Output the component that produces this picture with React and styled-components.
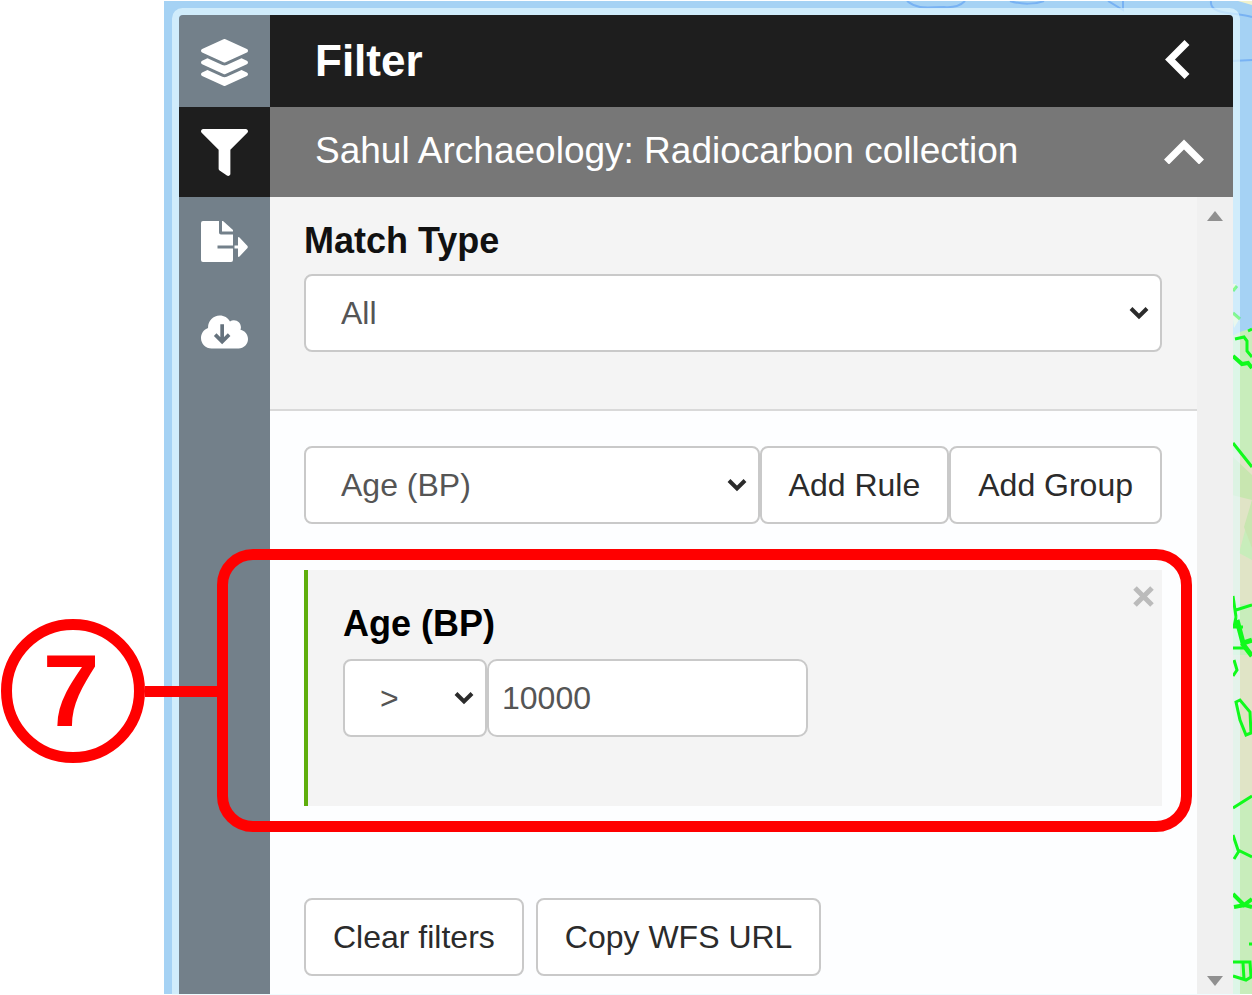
import React from "react";
import styled, { createGlobalStyle } from "styled-components";
import { FaLayerGroup, FaFilter } from "react-icons/fa";

const GlobalStyle = createGlobalStyle`
  *, *::before, *::after { box-sizing: border-box; }
  body {
    margin: 0;
    background: #fff;
    font-family: "Liberation Sans", Arial, Helvetica, sans-serif;
    color: #111;
  }
  button, input, select { font: inherit; margin: 0; }
  h1, h2 { margin: 0; }
`;

const Page = styled.main`
  display: flex;
  min-height: 100vh;
  padding: 1px 0 1px 164px;
`;

const MapArea = styled.div`
  position: relative;
  isolation: isolate;
  display: flex;
  flex: 1;
  min-width: 0;
  padding: 14px 19px 0 15px;
  background: #a5d2f4;
`;

const MapLayer = styled.svg`
  position: absolute;
  z-index: ${(p) => p.$level};
  top: 0;
  right: 0;
  width: 360px;
  height: 100%;
`;

const Panel = styled.section`
  position: relative;
  display: flex;
  flex: 1;
  min-width: 0;

  &::before {
    content: "";
    position: absolute;
    z-index: -1;
    inset: 0;
    border-radius: 4px 4px 0 0;
    box-shadow: 0 0 0 7px rgba(230, 250, 255, 0.65);
  }
`;

const Sidebar = styled.nav`
  display: flex;
  flex-direction: column;
  flex: none;
  width: 91px;
  padding-top: 2px;
  background: #73808a;
  border-radius: 4px 0 0 0;
`;

const SideTab = styled.button`
  display: flex;
  align-items: center;
  justify-content: center;
  height: 90px;
  padding: 0;
  border: 0;
  color: #fff;
  background: ${(p) => (p.$active ? "#1e1e1e" : "transparent")};
`;

const Main = styled.div`
  display: flex;
  flex-direction: column;
  flex: 1;
  min-width: 0;
`;

const TitleBar = styled.header`
  display: flex;
  align-items: center;
  justify-content: space-between;
  height: 92px;
  padding: 0 42px 0 45px;
  color: #fff;
  background: #1e1e1e;
  border-radius: 0 4px 0 0;
`;

const Title = styled.h1`
  font-size: 44px;
  line-height: 48px;
`;

const IconButton = styled.button`
  display: flex;
  padding: 0;
  border: 0;
  color: inherit;
  background: none;
`;

const LayerHeading = styled.h2`
  font-size: 37px;
  font-weight: 400;
  line-height: 44px;
`;

const LayerToggle = styled.button`
  display: flex;
  align-items: center;
  justify-content: space-between;
  width: 100%;
  height: 90px;
  padding: 0 28px 2px 45px;
  border: 0;
  color: #fff;
  background: #777;
  text-align: left;
`;

const Body = styled.div`
  display: flex;
  flex: 1;
`;

const Form = styled.form`
  flex: 1;
  min-width: 0;
  background: #fdfeff;
`;

const Scrollbar = styled.div`
  display: flex;
  flex-direction: column;
  justify-content: space-between;
  align-items: center;
  flex: none;
  width: 36px;
  padding: 14px 0 8px;
  background: #f0f0f0;
`;

const MatchSection = styled.div`
  padding: 21px 35px 57px 34px;
  background: #f4f4f4;
  border-bottom: 2px solid #d9d9d9;
`;

const RulesSection = styled.div`
  padding: 35px 35px 16px 34px;
`;

const Label = styled.label`
  display: block;
  padding-bottom: 10px;
  font-size: 36px;
  font-weight: 700;
  line-height: 46px;
`;

const Row = styled.div`
  display: flex;
  gap: ${(p) => p.$gap || 0}px;
`;

const SelectBox = styled.div`
  display: grid;
  align-items: center;
  flex: ${(p) => (p.$width ? "none" : 1)};
  width: ${(p) => (p.$width ? `${p.$width}px` : "auto")};
  min-width: 0;

  > * { grid-area: 1 / 1; }
  > svg { justify-self: end; margin-right: 13px; pointer-events: none; }
`;

const Select = styled.select`
  appearance: none;
  width: 100%;
  height: 78px;
  padding: 0 35px;
  border: 2px solid #c9c9c9;
  border-radius: 8px;
  font-size: 32px;
  color: #555;
  background: #fff;
`;

const TextInput = styled.input`
  width: 321px;
  height: 78px;
  padding: 0 13px;
  border: 2px solid #c9c9c9;
  border-radius: 10px;
  font-size: 32px;
  color: #555;
  background: #fff;
`;

const Button = styled.button`
  height: 78px;
  padding: 0 27px;
  border: 2px solid #c9c9c9;
  border-radius: 8px;
  font-size: 32px;
  white-space: nowrap;
  color: #2b2b2b;
  background: #fff;
`;

const RuleCard = styled.div`
  position: relative;
  display: flex;
  justify-content: space-between;
  align-items: flex-start;
  margin: 46px 0 92px;
  padding: 16px 8px 69px 35px;
  border-left: 4px solid #5fae0d;
  background: #f4f4f4;
`;

const RuleFields = styled.div`
  padding-top: 15px;

  ${Label} { padding-bottom: 12px; color: #000; }
`;

const Highlight = styled.div`
  position: absolute;
  inset: -21px -30px -26px -91px;
  border: 11px solid #f00;
  border-radius: 36px;
  pointer-events: none;
`;

const Callout = styled.div`
  position: absolute;
  top: 59px;
  right: 100%;
  display: flex;
  align-items: center;
  margin-right: 10px;
`;

const CalloutNumber = styled.span`
  display: flex;
  align-items: center;
  justify-content: center;
  width: 144px;
  height: 144px;
  padding-right: 4px;
  border: 11px solid #f00;
  border-radius: 50%;
  font-size: 102px;
  font-weight: 700;
  line-height: 110px;
  color: #f00;
  background: #fff;
`;

const CalloutLine = styled.span`
  width: 73px;
  height: 11px;
  background: #f00;
`;

function Chevron() {
  return (
    <svg width="20" height="14" viewBox="0 0 20 14" fill="none" stroke="#2b2b2b" strokeWidth="4" aria-hidden="true">
      <path d="M2 2.5 10 10.5 18 2.5" />
    </svg>
  );
}

function ExportIcon() {
  return (
    <svg width="47" height="42" viewBox="0 0 47 42" fill="currentColor" aria-hidden="true">
      <path d="M2 0H18V11.500Q18 13.500 20 13.500H32V24.500H16.500V27.500H32V39Q32 41 30 41H2Q0 41 0 39V2Q0 0 2 0Z" />
      <path d="M21 0 22 0 32 9V10.500H21Z" />
      <path d="M33.500 24.500H37V17Q37 15.500 38.500 16.500L46.500 25Q47 26 46.500 27L38.500 35.500Q37 36.500 37 35V27.500H33.500Z" />
    </svg>
  );
}

function CloudDownIcon() {
  return (
    <svg width="47" height="38" viewBox="0 0 640 512" aria-hidden="true">
      <path
        fill="currentColor"
        d="M537.6 226.6c4.1-10.7 6.4-22.4 6.4-34.600 0-53-43-96-96-96-19.700 0-38.100 6-53.300 16.200C367 64.200 315.300 32 256 32c-88.400 0-160 71.600-160 160 0 2.700.1 5.400.2 8.100C40.200 219.800 0 273.200 0 336c0 79.500 64.500 144 144 144h368c70.700 0 128-57.300 128-128 0-61.900-44-113.600-102.400-125.400z"
      />
      <path fill="none" stroke="#65727d" strokeWidth="50" d="M288 152V385M193 292 288 387 383 292" />
    </svg>
  );
}

const mapView = { viewBox: "892 1 360 993", preserveAspectRatio: "xMaxYMin slice", "aria-hidden": true };

function MapTerrain() {
  return (
    <MapLayer $level={-2} {...mapView}>
      <path fill="#c8edbb" d="M1232 336 1240 332 1252 328V995H1232Z" />
      <path fill="#e0e4c6" d="M1232 450 1242 456 1252 464V500L1246 527 1239 553 1252 560V604H1232Z" />
      <path fill="#c8e6b0" d="M1252 500 1244 527 1252 548ZM1232 456 1252 475V500L1232 495Z" />
      <path fill="#e0e4c6" d="M1232 655H1252V795L1232 806Z" />
      <path fill="#f1f2cc" d="M1232 284h4v6h-4ZM1232 312 1240 318 1234 328ZM1238 1H1252V5Z" />
      <path fill="none" stroke="#78b2f3" strokeWidth="2" d="M907 1C918 10 928 7 944 7 955 8 961 5 965 1M1010 1C1022 5 1036 4 1044 1M1108 1 1123 10V1M1211 1C1209 16 1238 12 1252 17M1232 61 1252 60" />
    </MapLayer>
  );
}

function MapRoads() {
  return (
    <MapLayer $level={0} {...mapView}>
      <g fill="none" stroke="#10fa1c" strokeWidth="3">
        <path strokeOpacity="0.45" d="M1233 291 1237 286M1233 313 1240 319" />
        <path d="M1252 329 1248 331M1235 339 1244 337 1247 341V351L1252 357" />
        <path strokeWidth="4" d="M1233 356 1242 364 1248 363 1252 368" />
        <path d="M1233 443 1252 467M1233 596 1236 617M1236 610 1252 605M1236 617 1234 627 1243 627" />
        <path strokeWidth="5" d="M1237 620 1243 643 1252 640M1242 643 1252 656" />
        <path d="M1233 648H1245M1234 660 1237 670 1233 676" />
        <path d="M1236 702 1240 700 1250 712 1251 733 1246 735 1240 720Z" />
        <path d="M1233 808 1252 796M1233 835 1238 850 1252 857M1239 851 1234 859" />
        <path strokeWidth="4" d="M1233 894 1244 905 1252 899M1234 907 1245 905 1252 907" />
        <path d="M1233 962H1250L1251 977 1246 980 1233 976M1243 963 1244 979M1252 944H1249" />
      </g>
    </MapLayer>
  );
}

export default function App() {
  return (
    <>
      <GlobalStyle />
      <Page>
        <MapArea>
          <MapTerrain />
          <MapRoads />
          <Panel>
            <Sidebar aria-label="Map tools">
              <SideTab type="button" aria-label="Layers"><FaLayerGroup size={47} /></SideTab>
              <SideTab type="button" aria-label="Filter" $active><FaFilter size={47} /></SideTab>
              <SideTab type="button" aria-label="Export"><ExportIcon /></SideTab>
              <SideTab type="button" aria-label="Download"><CloudDownIcon /></SideTab>
            </Sidebar>
            <Main>
              <TitleBar>
                <Title>Filter</Title>
                <IconButton type="button" aria-label="Collapse panel">
                  <svg width="26" height="44" viewBox="0 0 26 44" fill="none" stroke="currentColor" strokeWidth="7">
                    <path d="M22 3.500 5 20.500 22 37.500" />
                  </svg>
                </IconButton>
              </TitleBar>
              <LayerHeading>
                <LayerToggle type="button" aria-expanded="true">
                  Sahul Archaeology: Radiocarbon collection
                  <svg width="42" height="26" viewBox="0 0 42 26" fill="none" stroke="currentColor" strokeWidth="7">
                    <path d="M3.500 24 21 6.500 38.500 24" />
                  </svg>
                </LayerToggle>
              </LayerHeading>
              <Body>
                <Form onSubmit={(e) => e.preventDefault()}>
                  <MatchSection>
                    <Label htmlFor="match">Match Type</Label>
                    <SelectBox>
                      <Select id="match"><option>All</option><option>Any</option></Select>
                      <Chevron />
                    </SelectBox>
                  </MatchSection>
                  <RulesSection>
                    <Row>
                      <SelectBox>
                        <Select aria-label="Field"><option>Age (BP)</option></Select>
                        <Chevron />
                      </SelectBox>
                      <Button type="button">Add Rule</Button>
                      <Button type="button">Add Group</Button>
                    </Row>
                    <RuleCard>
                      <RuleFields>
                        <Label htmlFor="age">Age (BP)</Label>
                        <Row>
                          <SelectBox $width={144}>
                            <Select aria-label="Operator"><option>&gt;</option><option>&lt;</option></Select>
                            <Chevron />
                          </SelectBox>
                          <TextInput id="age" type="text" defaultValue="10000" />
                        </Row>
                      </RuleFields>
                      <IconButton type="button" aria-label="Remove rule">
                        <svg width="21" height="21" viewBox="0 0 21 21" fill="none" stroke="#bbb" strokeWidth="5">
                          <path d="M2 2 19 19M19 2 2 19" />
                        </svg>
                      </IconButton>
                      <Highlight>
                        <Callout>
                          <CalloutNumber>7</CalloutNumber>
                          <CalloutLine />
                        </Callout>
                      </Highlight>
                    </RuleCard>
                    <Row $gap={12}>
                      <Button type="button">Clear filters</Button>
                      <Button type="button">Copy WFS URL</Button>
                    </Row>
                  </RulesSection>
                </Form>
                <Scrollbar aria-hidden="true">
                  <svg width="16" height="10" viewBox="0 0 16 10"><path fill="#909090" d="M8 0 16 10H0Z" /></svg>
                  <svg width="16" height="10" viewBox="0 0 16 10"><path fill="#909090" d="M0 0H16L8 10Z" /></svg>
                </Scrollbar>
              </Body>
            </Main>
          </Panel>
        </MapArea>
      </Page>
    </>
  );
}
